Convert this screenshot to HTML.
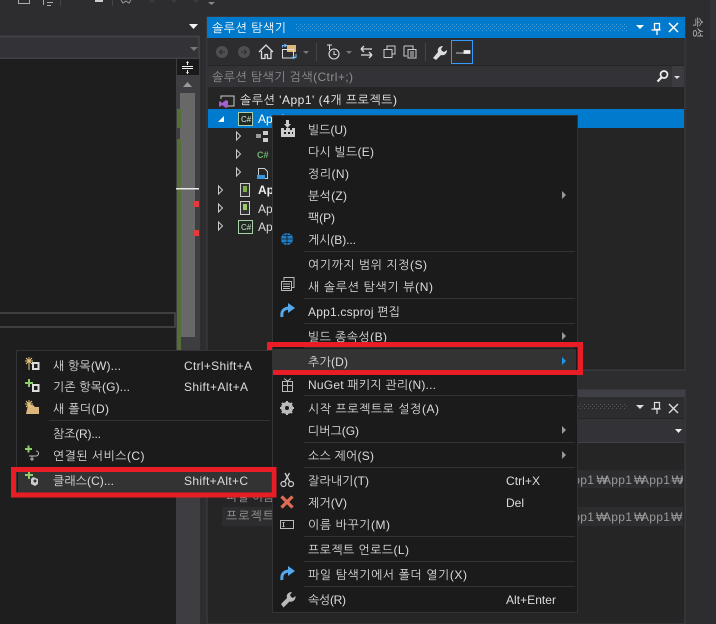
<!DOCTYPE html>
<html lang="ko"><head><meta charset="utf-8"><title>솔루션 탐색기</title>
<style>
html,body{margin:0;padding:0;background:#2d2d30;width:716px;height:624px;overflow:hidden}
svg{display:block}
text{font-family:"Liberation Sans","NanumGothic","Noto Sans CJK KR",sans-serif;font-size:12px;fill:#f1f1f1}
.d text{fill:#dcdcdc}
.g{fill:#999}
</style></head><body>
<svg width="716" height="624" viewBox="0 0 716 624" xmlns="http://www.w3.org/2000/svg">
<defs><pattern id="dots" width="4" height="4" patternUnits="userSpaceOnUse"><rect width="1" height="1" fill="#4aa3dc"/><rect x="2" y="2" width="1" height="1" fill="#4aa3dc"/></pattern>
<pattern id="dots2" width="4" height="4" patternUnits="userSpaceOnUse"><rect width="1" height="1" fill="#55555a"/><rect x="2" y="2" width="1" height="1" fill="#55555a"/></pattern></defs>
<rect width="716" height="624" fill="#2d2d30"/>
<!-- top strip fragments -->
<path d="M18.500 0v3.500h11V0M43.500 0v5M47 2.500h6M47 5.500h4" stroke="#aaa" fill="none"/>
<path d="M60.500 0v6M112.500 0v6" stroke="#444"/>
<rect x="95" y="0" width="8" height="2" fill="#ccc"/>
<path d="M121 0l2 3 3-2 3 2 2-3" stroke="#999" fill="none"/>
<path d="M150 0l2 2 2-2M172 0l2 2 2-2M194 0l2 2 2-2" stroke="#444" fill="none"/>
<path d="M189 24h9l-4.500 5z" fill="#f1f1f1"/>
<path d="M208 2h7l-3.500 3z" fill="#888"/>
<!-- left editor -->
<rect x="-2" y="36.500" width="201" height="22" fill="#333337" stroke="#3f3f46" stroke-width="2"/>
<path d="M190 47h8l-4 4z" fill="#777"/>
<rect x="0" y="59" width="176" height="565" fill="#1e1e1e"/>
<rect x="176" y="59" width="24" height="565" fill="#3e3e42"/>
<rect x="177" y="59" width="22" height="16" fill="#1a1a1a"/>
<path d="M182 66.500h11M182 68.500h11M187.500 62v3M187.500 70v4" stroke="#eee"/>
<path d="M186 63l1.500-2 1.500 2zM186 72l1.500 2 1.500-2z" fill="#eee"/>
<path d="M183 87l4.500-5 4.500 5z" fill="#999"/>
<rect x="180" y="93" width="15" height="244" fill="#686868"/>
<rect x="177" y="109" width="4" height="19" fill="#566f37"/>
<rect x="177" y="139" width="4" height="211" fill="#566f37"/>
<rect x="176" y="188" width="23" height="1.500" fill="#e8e8e8"/>
<rect x="194" y="201" width="5" height="6" fill="#e8383a"/>
<rect x="194" y="230" width="5" height="6" fill="#e8383a"/>
<rect x="-3" y="313" width="178" height="14" fill="#1e1e1e" stroke="#3f3f42" stroke-width="2"/>
<!-- Solution Explorer -->
<rect x="207" y="17" width="478" height="353" fill="#252526" stroke="#3f3f46"/>
<rect x="207" y="17" width="478" height="21" fill="#007acc"/>
<text x="212" y="32" style="fill:#fff" textLength="74">솔루션 탐색기</text>
<rect x="295" y="24" width="333" height="7" fill="url(#dots)"/>
<path d="M636 25h8l-4 4z" fill="#fff"/>
<path d="M654.500 23.500h5v6h-5zM651.500 30h9M657 30v5" stroke="#fff" fill="none" stroke-width="1.300"/>
<path d="M669 23l9 9M678 23l-9 9" stroke="#fff" stroke-width="1.500"/>
<rect x="208" y="38" width="476" height="27" fill="#2d2d30"/>
<circle cx="222" cy="52" r="6" fill="#4f4f52"/><path d="M225 52h-5M222 49.500l-2.500 2.500 2.500 2.500" stroke="#2d2d30" fill="none"/>
<circle cx="244" cy="52" r="6" fill="#4f4f52"/><path d="M241 52h5M244 49.500l2.500 2.500-2.500 2.500" stroke="#2d2d30" fill="none"/>
<path d="M259 52l7-7 7 7M261.500 51v7.500h3.500v-4h2.500v4h3.500V51" stroke="#ddd" stroke-width="1.300" fill="none"/>
<rect x="287" y="45" width="9" height="7" fill="#dcb67a"/>
<path d="M282.500 49.500h11v8.500h-11z" stroke="#ddd" fill="none"/>
<path d="M282.500 47.500v-2h4M284.500 44l2 1.500-2 1.500M296 54v3.500h-3M294.500 56l-2 1.500 2 1.500" stroke="#75beff" fill="none"/>
<path d="M303 51h6l-3 3z" fill="#777"/>
<path d="M316.500 43v18" stroke="#444"/>
<circle cx="334" cy="54" r="5" stroke="#ddd" stroke-width="1.100" fill="none"/>
<path d="M334 51v3.500h2.500M327 45h5M329.500 45v5" stroke="#ddd" fill="none"/>
<path d="M346 51h6l-3 3z" fill="#777"/>
<path d="M361 49h11M361 49l3-3M361 49l3 3M372 55h-11M372 55l-3-3M372 55l-3 3" stroke="#ddd" stroke-width="1.300" fill="none"/>
<path d="M384 49.500h8v8h-8zM387 49v-3h8v8h-3" stroke="#ccc" fill="none"/>
<path d="M404 46h9v3M404 46v10h3M408 49.500h8v8.500h-8zM410 52h4M410 54h4M410 56h4" stroke="#ccc" fill="none"/>
<path d="M425.500 43v18" stroke="#444"/>
<path d="M433 58l5-6c-1-3 1-6 5-6l-2 3 1 2 2 1 3-2c0 4-3 6-6 5l-5 5z" fill="#ddd"/>
<rect x="451.500" y="40.500" width="21" height="23" fill="#2d2d30" stroke="#3399ff"/>
<path d="M456 53h8M464 50.500h6v3h-6z" stroke="#eee" fill="#eee" stroke-width=".8"/>
<rect x="208" y="66" width="476" height="21" fill="#333337"/>
<text x="212" y="81" style="fill:#8f8f90" textLength="141">솔루션 탐색기 검색(Ctrl+;)</text>
<rect x="672" y="66" width="12" height="21" fill="#3c3c40"/>
<circle cx="664" cy="74.500" r="3.500" stroke="#eee" stroke-width="1.700" fill="none"/>
<path d="M661.500 77.500l-4 4" stroke="#eee" stroke-width="2.200"/>
<path d="M674 76h6l-3 3z" fill="#ddd"/>
<!-- Tree -->
<path d="M221 99v-3h13v10h-6" stroke="#ccc" fill="none"/>
<path d="M220 101l2 2 4-3 2 1v6l-2 1-4-3-2 2-1-1v-4z" fill="#a45fd0"/>
<text x="240" y="104" style="fill:#e8e8e8" textLength="157">솔루션 'App1' (4개 프로젝트)</text>
<rect x="208" y="109" width="476" height="19" fill="#007acc"/>
<path d="M218 122l6-6v6z" fill="#fff"/>
<rect x="238.500" y="112.500" width="14" height="13" fill="#1e2a22" stroke="#a9d0a9"/>
<text x="241" y="122" style="font-size:8px;fill:#e8e8e8">C#</text>
<text x="258" y="123" style="fill:#fff">App1</text>
<g fill="none" stroke="#ccc"><path d="M236.500 132v8l4-4zM236.500 150v8l4-4zM236.500 168v8l4-4zM218.500 186v8l4-4zM218.500 204v8l4-4zM218.500 222v8l4-4z"/></g>
<rect x="256" y="134" width="5" height="4" fill="#999"/><rect x="263" y="131" width="5" height="4" fill="#ccc"/><rect x="263" y="138" width="5" height="4" fill="#ccc"/>
<text x="257" y="158" style="font-size:9px;font-weight:bold;fill:#6db36d">C#</text>
<path d="M258.500 168.500h6l3 3v7h-9z" stroke="#ccc" fill="none"/><rect x="257" y="175" width="8" height="4" fill="#3a96dd"/>
<rect x="240.500" y="183.500" width="9" height="13" fill="#333" stroke="#ccc"/><rect x="243" y="186" width="4" height="6" fill="#7cb342"/>
<text x="258" y="194" style="font-weight:bold;fill:#eee">App</text>
<rect x="240.500" y="201.500" width="9" height="13" fill="#333" stroke="#ccc"/><rect x="243" y="204" width="4" height="6" fill="#9ccc65"/>
<text x="258" y="213" style="fill:#dcdcdc">App</text>
<rect x="238.500" y="220.500" width="14" height="13" fill="#1e2a22" stroke="#a9d0a9"/>
<text x="241" y="230" style="font-size:8px;fill:#ddd">C#</text>
<text x="258" y="231" style="fill:#dcdcdc">App</text>
<!-- Right tab -->
<rect x="710" y="0" width="6" height="40" fill="#333337"/>
<text transform="translate(694,17) rotate(90)" style="font-size:11px;fill:#c8c8c8" textLength="21">속성</text>
<!-- Bottom panel -->
<rect x="207" y="390" width="478" height="234" fill="#252526" stroke="#3f3f46"/>
<rect x="207" y="390" width="478" height="7" fill="#3f3f46"/>
<rect x="208" y="397" width="476" height="21" fill="#2d2d30"/>
<rect x="578" y="403" width="50" height="7" fill="url(#dots2)"/>
<path d="M636 405h8l-4 4z" fill="#ddd"/>
<path d="M654.500 402.500h5v6h-5zM651.500 409h9M657 409v5" stroke="#ddd" fill="none" stroke-width="1.200"/>
<path d="M669 404l9 9M678 404l-9 9" stroke="#ddd" stroke-width="1.400"/>
<rect x="208" y="419" width="476" height="23" fill="#333337"/>
<path d="M675 429h7l-3.500 4z" fill="#eee"/>
<path d="M208 442.500h476" stroke="#3f3f46"/>
<rect x="222" y="470" width="461" height="18" fill="#2d2d2f"/>
<rect x="222" y="507" width="461" height="19" fill="#2d2d2f"/>
<text x="226" y="501" class="g" style="fill:#999">파일 이름</text>
<text x="226" y="520" class="g" style="fill:#999" textLength="48">프로젝트</text>
<svg x="560" y="470" width="123" height="18"><text y="14" style="fill:#999" letter-spacing=".3"><tspan x="5">App1</tspan><tspan x="36.500">₩</tspan><tspan x="43">App1</tspan><tspan x="74">₩</tspan><tspan x="81">App1</tspan><tspan x="111.500">₩</tspan><tspan x="120">A</tspan></text></svg>
<text y="521" style="fill:#999" letter-spacing=".3"><tspan x="565">App1</tspan><tspan x="596">₩</tspan><tspan x="603">App1</tspan><tspan x="634">₩</tspan><tspan x="641">App1</tspan><tspan x="671">₩</tspan></text>
<!-- Main menu -->
<rect x="272.500" y="115.500" width="305" height="497" fill="#1b1b1c" stroke="#333337"/>
<g stroke="#333337"><path d="M304 251.500h271M304 298.500h271M304 323.500h271M304 347.500h271M304 395.500h271M304 442.500h271M304 467.500h271M304 536.500h271M304 561.500h271M304 586.500h271"/></g>
<rect x="273" y="349" width="303" height="24" fill="#333334"/>
<g class="d">
<text x="308" y="134" textLength="39">빌드(U)</text>
<text x="308" y="156" textLength="66">다시 빌드(E)</text>
<text x="308" y="178" textLength="41">정리(N)</text>
<text x="308" y="200" textLength="39">분석(Z)</text>
<text x="308" y="222" textLength="27">팩(P)</text>
<text x="308" y="244" textLength="48">게시(B)...</text>
<text x="308" y="269" textLength="119">여기까지 범위 지정(S)</text>
<text x="308" y="291" textLength="125">새 솔루션 탐색기 뷰(N)</text>
<text x="308" y="316" textLength="92">App1.csproj 편집</text>
<text x="308" y="341" textLength="79">빌드 종속성(B)</text>
<text x="308" y="366" textLength="40">추가(D)</text>
<text x="308" y="389" textLength="128">NuGet 패키지 관리(N)...</text>
<text x="308" y="413" textLength="131">시작 프로젝트로 설정(A)</text>
<text x="308" y="435" textLength="51">디버그(G)</text>
<text x="308" y="460" textLength="66">소스 제어(S)</text>
<text x="308" y="485" textLength="61">잘라내기(T)</text>
<text x="506" y="485" textLength="34">Ctrl+X</text>
<text x="308" y="507" textLength="39">제거(V)</text>
<text x="506" y="507">Del</text>
<text x="308" y="529" textLength="82">이름 바꾸기(M)</text>
<text x="308" y="554" textLength="101">프로젝트 언로드(L)</text>
<text x="308" y="579" textLength="159">파일 탐색기에서 폴더 열기(X)</text>
<text x="308" y="604" textLength="38">속성(R)</text>
<text x="506" y="604" textLength="50">Alt+Enter</text>
</g>
<g fill="#999"><path d="M562 191l4 4-4 4zM562 332l4 4-4 4zM562 426l4 4-4 4zM562 451l4 4-4 4z"/></g>
<path d="M562 357l4 4-4 4z" fill="#1c97ea"/>
<!-- menu icons -->
<path d="M281 128h3v2h2v-2h4v2h2v-2h3v9h-14z" fill="#ccc"/>
<path d="M286 120h3v4h2l-3.500 4-3.500-4h2z" fill="#ccc"/>
<path d="M284 132h2v2h-2zM288 132h2v2h-2zM292 132h1v2h-1z" fill="#1b1b1c"/>
<circle cx="287" cy="239" r="6" fill="#1c7fc7"/><path d="M281 239h12M287 233v12M283 235c2 1 6 1 8 0M283 243c2-1 6-1 8 0" stroke="#1b1b1c" fill="none" stroke-width=".8"/>
<path d="M284 280.500v-3h10v10h-2" stroke="#bbb" fill="none"/><path d="M281.500 281.500h10v9h-10zM283 284h7M283 286.500h7M283 288.500h7" stroke="#bbb" fill="none"/>
<path d="M282 317c-1-6 2-9 8-9" stroke="#55a8ea" stroke-width="3" fill="none"/><path d="M288 303l7 5-7 5z" fill="#55a8ea"/>
<path d="M282.500 381.500h10v10h-10zM282 385.500h11M287.500 381v11M284 378.500l3.500 2.500 3.500-2.500" stroke="#bbb" fill="none"/>
<circle cx="287" cy="408" r="4.500" stroke="#bbb" stroke-width="3" fill="none"/>
<path d="M287 401v14M280 408h14M282 403l10 10M292 403l-10 10" stroke="#bbb" stroke-width="2"/>
<circle cx="287" cy="408" r="2" fill="#1b1b1c"/>
<circle cx="283.500" cy="484" r="2.500" stroke="#ccc" fill="none" stroke-width="1.200"/><circle cx="291" cy="484" r="2.500" stroke="#ccc" fill="none" stroke-width="1.200"/>
<path d="M284.500 482l5-9M290 482l-5-9" stroke="#ccc" stroke-width="1.300"/>
<path d="M281.500 496.500l11 11M292.500 496.500l-11 11" stroke="#e06c55" stroke-width="3.300"/>
<rect x="280.500" y="520.500" width="13" height="8" fill="none" stroke="#bbb"/><path d="M282.500 522.500h2M282.500 526.500h2M283.500 522.500v4" stroke="#bbb"/>
<path d="M282 580c-1-6 2-9 8-9" stroke="#55a8ea" stroke-width="3" fill="none"/><path d="M288 566l7 5-7 5z" fill="#55a8ea"/>
<path d="M281 604l6-6c-1-3 1-6 5-6l-2 3 1 2 2 1 2.500-2c.5 4-3 6.500-6 5.500l-6 6z" fill="#bbb"/>
<!-- Red box main -->
<rect x="269.500" y="344.500" width="311" height="28" fill="none" stroke="#e81d25" stroke-width="5"/>
<!-- Sub menu -->
<rect x="16.500" y="350.500" width="256" height="145" fill="#1b1b1c" stroke="#333337"/>
<path d="M49 420.500h221" stroke="#333337"/>
<rect x="18" y="471" width="253" height="22" fill="#333334"/>
<g class="d">
<text x="53" y="370" textLength="68">새 항목(W)...</text><text x="184" y="370" textLength="68">Ctrl+Shift+A</text>
<text x="53" y="391" textLength="77">기존 항목(G)...</text><text x="184" y="391" textLength="64">Shift+Alt+A</text>
<text x="53" y="413" textLength="56">새 폴더(D)</text>
<text x="53" y="438" textLength="48">참조(R)...</text>
<text x="53" y="460" textLength="91.500">연결된 서비스(C)</text>
<text x="53" y="485" textLength="61">클래스(C)...</text><text x="184" y="485" textLength="64">Shift+Alt+C</text>
</g>
<path d="M29 361v9" stroke="#e8c77c"/><path d="M26 358l6 6M32 358l-6 6M25 361h8M29 357v8" stroke="#e8c77c"/>
<rect x="33" y="363" width="5.500" height="6" fill="none" stroke="#ddd" stroke-width="2"/>
<path d="M25 383h8M29 379v8" stroke="#8ccf6a" stroke-width="2"/>
<rect x="33" y="385" width="5.500" height="6" fill="none" stroke="#ddd" stroke-width="2"/>
<path d="M28 405h5l2 2h4v7H26z" fill="#dcb67a"/><path d="M26 401l6 6M32 401l-6 6M25 404h8M29 400v8" stroke="#e8c77c"/>
<path d="M25 449h7M28.500 445.500v7" stroke="#8ccf6a" stroke-width="2"/>
<path d="M29 456h7a2.500 2.500 0 000-5M32 456v5M30 459h4" stroke="#bbb" fill="none"/>
<path d="M25 475h8M29 471v8" stroke="#8ccf6a" stroke-width="2"/>
<path d="M33 477l5 2v5l-3 2-4-2v-5z" fill="#ccc"/><circle cx="35" cy="481" r="1.500" fill="#333"/>
<rect x="13.500" y="469.500" width="260.500" height="25.500" fill="none" stroke="#e81d25" stroke-width="5"/>
</svg>
</body></html>
